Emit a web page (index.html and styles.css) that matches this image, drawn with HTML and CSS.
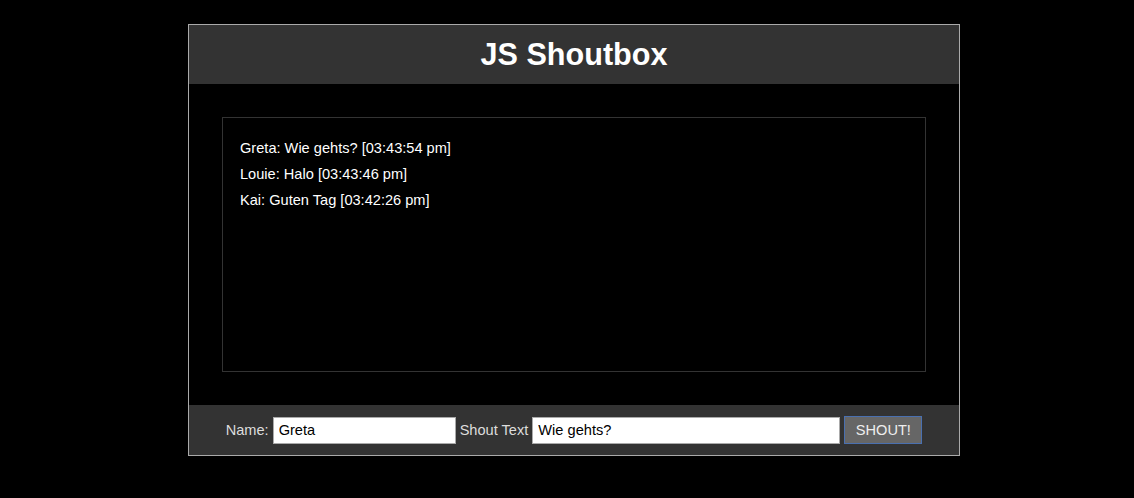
FILE: index.html
```html
<!DOCTYPE html>
<html>
<head>
<meta charset="utf-8">
<link rel="stylesheet" href="styles.css">
<title>JS Shoutbox</title>
</head>
<body>
<div class="container">
  <header class="header"><h1>JS Shoutbox</h1></header>
  <main class="main">
    <ul class="shouts">
      <li>Greta: Wie gehts? [03:43:54 pm]</li>
      <li>Louie: Halo [03:43:46 pm]</li>
      <li>Kai: Guten Tag [03:42:26 pm]</li>
    </ul>
  </main>
  <footer class="footer">
    <form class="shout-form">
      <label>Name:</label>
      <input type="text" class="name-input" value="Greta">
      <label>Shout Text</label>
      <input type="text" class="text-input" value="Wie gehts?">
      <button type="button" class="shout-btn">SHOUT!</button>
    </form>
  </footer>
</div>
</body>
</html>
```
FILE: styles.css
```css
html, body {
  background: #000;
}
body {
  margin: 0;
  padding: 24px 0 0 188px;
  font-family: "Liberation Sans", Arial, sans-serif;
  color: #fff;
}
.container {
  width: 770px;
  border: 1px solid #aaa;
  background: #000;
}
.header {
  background: #333;
  height: 59px;
  display: flex;
  align-items: center;
  justify-content: center;
}
.header h1 {
  margin: 0;
  font-size: 30.6px;
  font-weight: bold;
  color: #fff;
  line-height: 1;
}
.main {
  padding: 33px;
}
.shouts {
  list-style: none;
  margin: 0;
  padding: 17px 17px 13px;
  height: 223px;
  border: 1px solid #333;
  font-size: 14.6px;
  color: #fff;
}
.shouts li {
  line-height: 26px;
}
.footer {
  background: #333;
  height: 50px;
  display: flex;
  align-items: center;
  justify-content: center;
}
.shout-form {
  display: flex;
  align-items: center;
  font-size: 14.6px;
  color: #ddd;
}
.shout-form label {
  margin-right: 4px;
}
.shout-form input {
  font-family: "Liberation Sans", Arial, sans-serif;
  font-size: 14.6px;
  height: 27px;
  box-sizing: border-box;
  border: 1px solid #aaa;
  background: #fff;
  color: #000;
  padding: 0 5px;
  margin-right: 4px;
}
.name-input { width: 183px; }
.text-input { width: 308px; }
.shout-btn {
  font-family: "Liberation Sans", Arial, sans-serif;
  font-size: 14.6px;
  height: 28px;
  width: 78px;
  background: #666;
  color: #eee;
  border: 1px solid #4a70b0;
  padding: 0;
}
```
